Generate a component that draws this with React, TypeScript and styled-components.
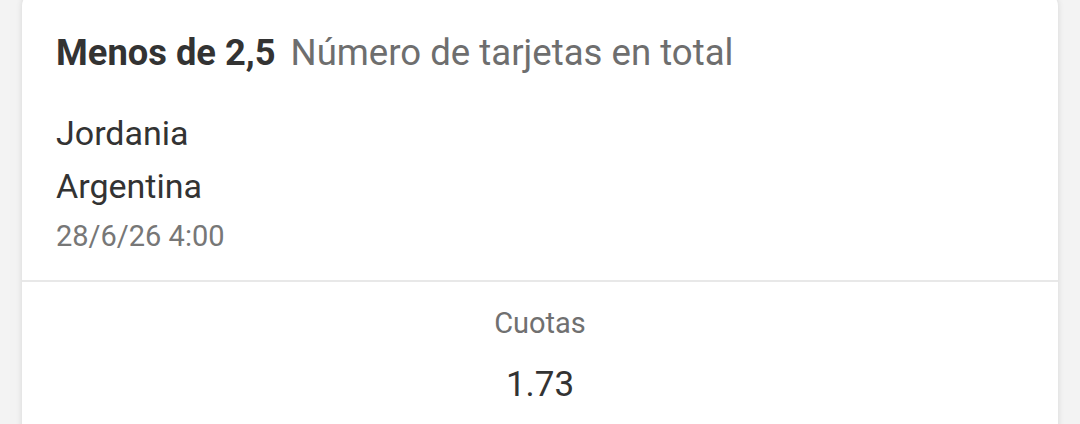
import React from "react";
import styled, { createGlobalStyle } from "styled-components";

const GlobalStyle = createGlobalStyle`
  html, body {
    margin: 0;
    padding: 0;
    background: #f3f3f3;
    font-family: Roboto, "Noto Sans", "Liberation Sans", sans-serif;
  }
`;

const Page = styled.div`
  width: 1080px;
  height: 424px;
  overflow: hidden;
  padding: 0 22px;
  box-sizing: border-box;
`;

const Card = styled.div`
  margin-top: -8px;
  background: #ffffff;
  border-radius: 14px;
  box-shadow: 0 0 6px rgba(0, 0, 0, 0.12);
  height: 460px;
`;

const BetHeader = styled.div`
  padding: 39px 34px 0;
  border-bottom: 2px solid #e8e8e8;
  height: 290px;
  box-sizing: border-box;
`;

const TitleRow = styled.div`
  display: flex;
  align-items: baseline;
  gap: 15px;
  line-height: 44px;
`;

const Selection = styled.span`
  font-weight: 700;
  font-size: 36.3px;
  color: #333333;
`;

const Market = styled.span`
  font-size: 36.6px;
  color: #6e6e6e;
`;

const Team = styled.div<{ $first?: boolean }>`
  font-size: 34px;
  color: #333333;
  line-height: 53px;
  margin-top: ${(p) => (p.$first ? "32px" : "0")};
`;

const EventDate = styled.div`
  font-size: 29px;
  color: #777777;
  line-height: 46px;
`;

const OddsBox = styled.div`
  display: flex;
  flex-direction: column;
  align-items: center;
  padding-top: 21px;
`;

const OddsLabel = styled.div`
  font-size: 29px;
  color: #707070;
  line-height: 40px;
`;

const OddsValue = styled.div`
  font-size: 35px;
  color: #333333;
  line-height: 40px;
  margin-top: 22px;
`;

const App = () => {
  return (
    <Page>
      <GlobalStyle />
      <Card>
        <BetHeader>
          <TitleRow>
            <Selection>Menos de 2,5</Selection>
            <Market>Número de tarjetas en total</Market>
          </TitleRow>
          <Team $first>Jordania</Team>
          <Team>Argentina</Team>
          <EventDate>28/6/26 4:00</EventDate>
        </BetHeader>
        <OddsBox>
          <OddsLabel>Cuotas</OddsLabel>
          <OddsValue>1.73</OddsValue>
        </OddsBox>
      </Card>
    </Page>
  );
};

export default App;
